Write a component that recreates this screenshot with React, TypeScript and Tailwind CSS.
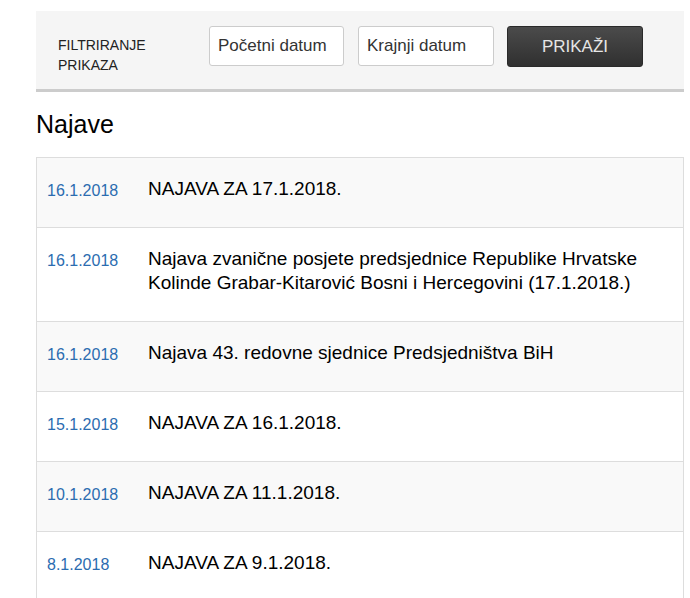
const NAJAVE = [
  { date: "16.1.2018", title: "NAJAVA ZA 17.1.2018." },
  {
    date: "16.1.2018",
    title:
      "Najava zvanične posjete predsjednice Republike Hrvatske Kolinde Grabar-Kitarović Bosni i Hercegovini (17.1.2018.)",
  },
  { date: "16.1.2018", title: "Najava 43. redovne sjednice Predsjedništva BiH" },
  { date: "15.1.2018", title: "NAJAVA ZA 16.1.2018." },
  { date: "10.1.2018", title: "NAJAVA ZA 11.1.2018." },
  { date: "8.1.2018", title: "NAJAVA ZA 9.1.2018." },
];

const FilterBar = () => {
  return (
    <div className="flex items-start h-[81px] bg-[#f5f5f5] border-b-[3px] border-[#cccccc] pl-[22px]">
      <div className="w-[151px] mt-[24px] text-[14px] leading-[20px] text-[#222]">
        FILTRIRANJE
        <br />
        PRIKAZA
      </div>
      <input
        placeholder="Početni datum"
        className="mt-[15px] w-[135px] h-[40px] px-[8px] bg-white border border-[#cccccc] rounded-[3px] text-[17px] text-[#333] placeholder:text-[#333] outline-none"
      />
      <input
        placeholder="Krajnji datum"
        className="mt-[15px] ml-[14px] w-[136px] h-[40px] px-[8px] bg-white border border-[#cccccc] rounded-[3px] text-[17px] text-[#333] placeholder:text-[#333] outline-none"
      />
      <button className="mt-[15px] ml-[13px] w-[136px] h-[41px] rounded-[3px] border border-[#2a2a2a] bg-linear-to-b from-[#4b4b4b] to-[#303030] text-[17px] text-[#e6e6e6]">
        PRIKAŽI
      </button>
    </div>
  );
};

const NajavaRow = ({ date, title, odd }: { date: string; title: string; odd: boolean }) => {
  return (
    <div
      className={`flex border-t border-[#dddddd] pt-[19px] pb-[26px] pl-[10px] pr-[10px] ${
        odd ? "bg-[#f9f9f9]" : "bg-white"
      }`}
    >
      <a className="w-[101px] shrink-0 pt-[4px] text-[16px] leading-[20px] text-[#2b6cb0]">
        {date}
      </a>
      <a className="text-[19px] leading-[24px] text-black">{title}</a>
    </div>
  );
};

export default function App() {
  return (
    <div className="min-h-screen bg-white font-['Liberation_Sans',Arial,sans-serif]">
      <div className="ml-[36px] w-[648px] pt-[11px]">
        <FilterBar />
        <h1 className="mt-[17px] mb-[18px] text-[25px] leading-[30px] text-black">Najave</h1>
        <div className="border-l border-r border-b border-[#dddddd]">
          {NAJAVE.map((item, idx) => (
            <NajavaRow key={idx} date={item.date} title={item.title} odd={idx % 2 === 0} />
          ))}
        </div>
      </div>
    </div>
  );
}
